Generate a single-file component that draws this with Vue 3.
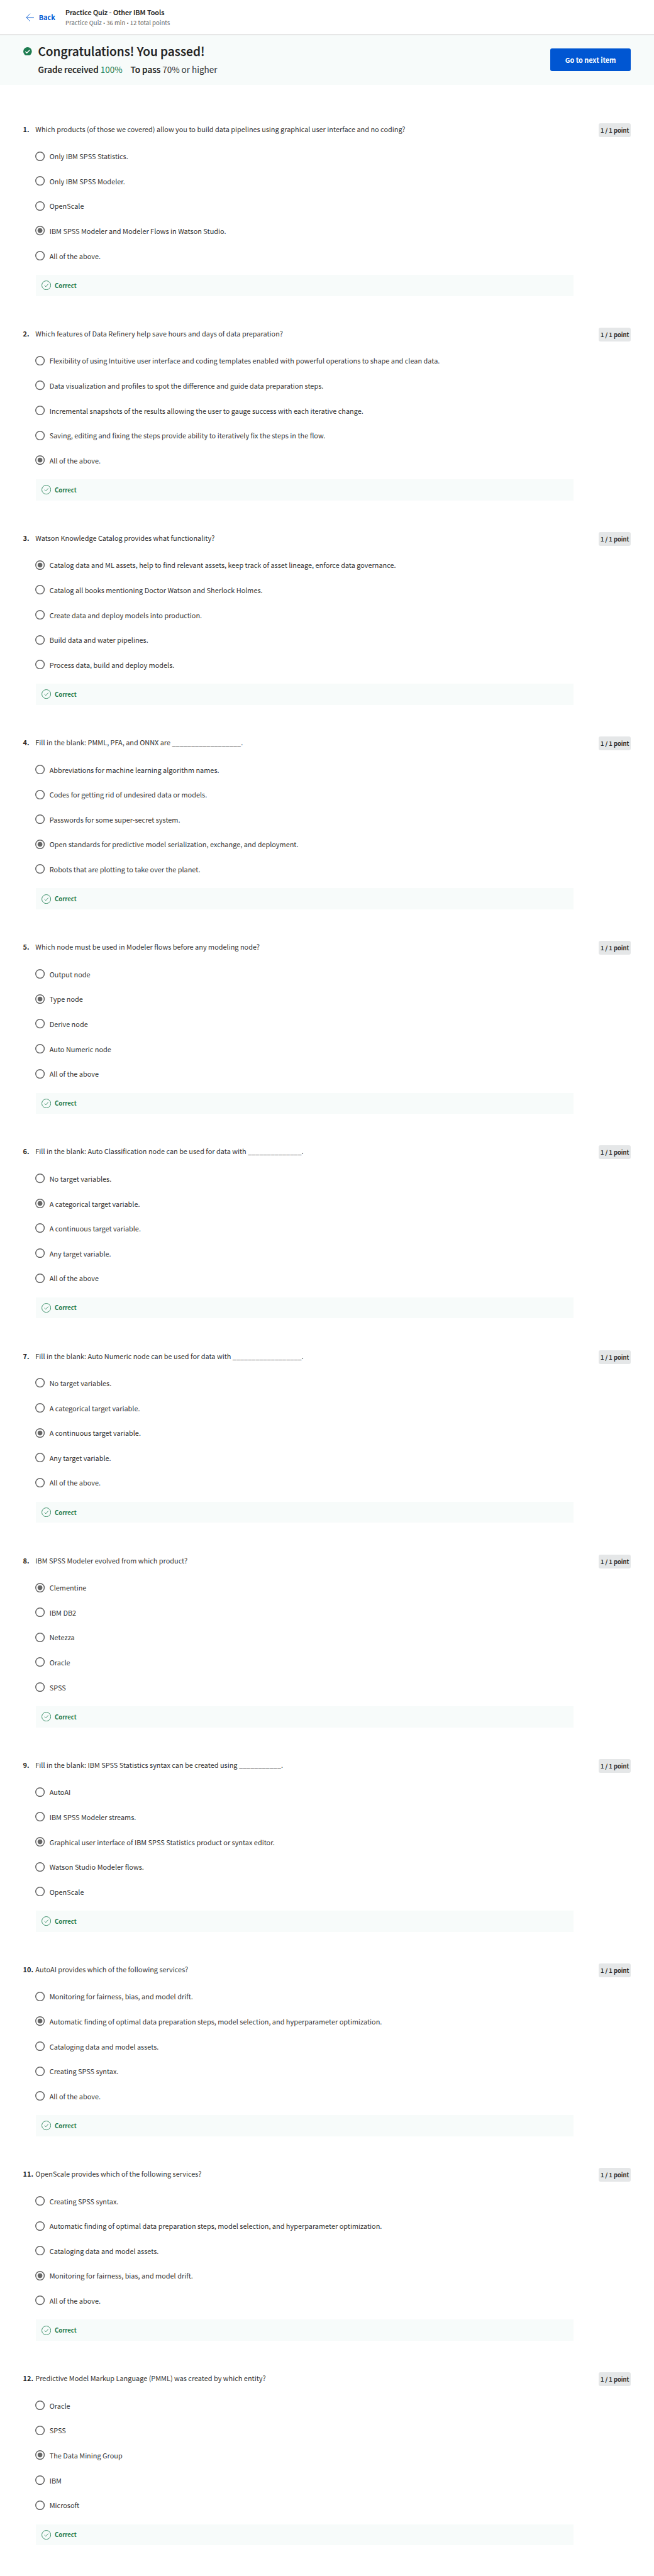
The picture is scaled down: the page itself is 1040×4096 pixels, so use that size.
<script setup>
const questions = [
  { text: 'Which products (of those we covered) allow you to build data pipelines using graphical user interface and no coding?', picked: 3,
    options: ['Only IBM SPSS Statistics.', 'Only IBM SPSS Modeler.', 'OpenScale', 'IBM SPSS Modeler and Modeler Flows in Watson Studio.', 'All of the above.'] },
  { text: 'Which features of Data Refinery help save hours and days of data preparation?', picked: 4,
    options: ['Flexibility of using Intuitive user interface and coding templates enabled with powerful operations to shape and clean data.', 'Data visualization and profiles to spot the difference and guide data preparation steps.', 'Incremental snapshots of the results allowing the user to gauge success with each iterative change.', 'Saving, editing and fixing the steps provide ability to iteratively fix the steps in the flow.', 'All of the above.'] },
  { text: 'Watson Knowledge Catalog provides what functionality?', picked: 0,
    options: ['Catalog data and ML assets, help to find relevant assets, keep track of asset lineage, enforce data governance.', 'Catalog all books mentioning Doctor Watson and Sherlock Holmes.', 'Create data and deploy models into production.', 'Build data and water pipelines.', 'Process data, build and deploy models.'] },
  { text: 'Fill in the blank: PMML, PFA, and ONNX are __________________.', picked: 3,
    options: ['Abbreviations for machine learning algorithm names.', 'Codes for getting rid of undesired data or models.', 'Passwords for some super-secret system.', 'Open standards for predictive model serialization, exchange, and deployment.', 'Robots that are plotting to take over the planet.'] },
  { text: 'Which node must be used in Modeler flows before any modeling node?', picked: 1,
    options: ['Output node', 'Type node', 'Derive node', 'Auto Numeric node', 'All of the above'] },
  { text: 'Fill in the blank: Auto Classification node can be used for data with ______________.', picked: 1,
    options: ['No target variables.', 'A categorical target variable.', 'A continuous target variable.', 'Any target variable.', 'All of the above'] },
  { text: 'Fill in the blank: Auto Numeric node can be used for data with __________________.', picked: 2,
    options: ['No target variables.', 'A categorical target variable.', 'A continuous target variable.', 'Any target variable.', 'All of the above.'] },
  { text: 'IBM SPSS Modeler evolved from which product?', picked: 0,
    options: ['Clementine', 'IBM DB2', 'Netezza', 'Oracle', 'SPSS'] },
  { text: 'Fill in the blank: IBM SPSS Statistics syntax can be created using ___________.', picked: 2,
    options: ['AutoAI', 'IBM SPSS Modeler streams.', 'Graphical user interface of IBM SPSS Statistics product or syntax editor.', 'Watson Studio Modeler flows.', 'OpenScale'] },
  { text: 'AutoAI provides which of the following services?', picked: 1,
    options: ['Monitoring for fairness, bias, and model drift.', 'Automatic finding of optimal data preparation steps, model selection, and hyperparameter optimization.', 'Cataloging data and model assets.', 'Creating SPSS syntax.', 'All of the above.'] },
  { text: 'OpenScale provides which of the following services?', picked: 3,
    options: ['Creating SPSS syntax.', 'Automatic finding of optimal data preparation steps, model selection, and hyperparameter optimization.', 'Cataloging data and model assets.', 'Monitoring for fairness, bias, and model drift.', 'All of the above.'] },
  { text: 'Predictive Model Markup Language (PMML) was created by which entity?', picked: 2,
    options: ['Oracle', 'SPSS', 'The Data Mining Group', 'IBM', 'Microsoft'] },
]
</script>

<template>
  <div class="page">
    <header class="topbar">
      <a class="back">
        <svg class="arrow" viewBox="0 0 18 18" fill="none" stroke="currentColor" stroke-width="1.1">
          <path d="M17 9H1.2M9 1L1.2 9L9 17" />
        </svg>
        <span>Back</span>
      </a>
      <div class="titles">
        <div class="title">Practice Quiz - Other IBM Tools</div>
        <div class="subtitle">Practice Quiz <i>•</i> 36 min <i>•</i> 12 total points</div>
      </div>
    </header>

    <section class="summary">
      <svg class="passed" viewBox="0 0 18 18">
        <circle cx="9" cy="9" r="9" fill="#1d7c50" />
        <path d="M4.3 9.3L7.4 12.2L13.6 5.8" fill="none" stroke="#fff" stroke-width="1.9" />
      </svg>
      <div class="result">
        <h1>Congratulations! You passed!</h1>
        <p class="grades">
          <span><b>Grade received</b> <em>100%</em></span>
          <span><b>To pass</b> 70% or higher</span>
        </p>
      </div>
      <button class="next">Go to next item</button>
    </section>

    <main class="quiz">
      <section v-for="(q, i) in questions" :key="i" class="question">
        <div class="head">
          <span class="num">{{ i + 1 }}.</span>
          <span class="prompt">{{ q.text }}</span>
          <span class="points">1 / 1 point</span>
        </div>
        <div class="options">
          <label v-for="(o, j) in q.options" :key="j" class="option">
            <svg class="radio" viewBox="0 0 20 20">
              <circle cx="10" cy="10" r="9" fill="#fff" stroke="#666" stroke-width="2" />
              <circle v-if="j === q.picked" cx="10" cy="10" r="5" fill="#666" />
            </svg>
            <span>{{ o }}</span>
          </label>
        </div>
        <div class="feedback">
          <svg class="check" viewBox="0 0 20 20" fill="none" stroke="currentColor" stroke-width="1.1">
            <circle cx="10" cy="10" r="9.3" />
            <path d="M6.2 10.2L9 12.9L14.1 7.3" />
          </svg>
          <span>Correct</span>
        </div>
      </section>
    </main>
  </div>
</template>

<style>
body {
  margin: 0;
  background: #fff;
}
</style>

<style scoped>
.page {
  --u: 0.76148px;
  box-sizing: border-box;
  width: 1040px;
  height: 4096px;
  overflow: hidden;
  background: #fff;
  color: #1f1f1f;
  font-family: "Noto Sans CJK SC", "Noto Sans", sans-serif;
  font-size: calc(14.33 * var(--u));
  white-space: nowrap;
}
.topbar {
  box-sizing: border-box;
  display: flex;
  height: calc(73 * var(--u));
  padding-left: calc(54 * var(--u));
  border-bottom: 1px solid #bbb;
}
.back {
  display: flex;
  align-items: center;
  gap: calc(9 * var(--u));
  width: calc(82.5 * var(--u));
  height: calc(72 * var(--u));
  color: #0056d2;
  font-size: calc(14.3 * var(--u));
  font-weight: 700;
}
.arrow {
  width: calc(18 * var(--u));
  height: calc(18 * var(--u));
}
.titles {
  padding-top: calc(16 * var(--u));
}
.title {
  font-size: calc(14.2 * var(--u));
  font-weight: 500;
  line-height: calc(20 * var(--u));
  -webkit-text-stroke: 0.2px currentColor;
}
.subtitle {
  margin-top: calc(3 * var(--u));
  color: #666;
  font-size: calc(12.53 * var(--u));
  line-height: calc(18 * var(--u));
}
.subtitle i {
  font-family: Roboto, sans-serif;
  font-style: normal;
}
.summary {
  box-sizing: border-box;
  display: flex;
  align-items: flex-start;
  height: calc(104 * var(--u));
  padding: 0 calc(48 * var(--u)) 0 calc(49 * var(--u));
  background: #f7fbfa;
}
.passed {
  width: calc(18 * var(--u));
  height: calc(18 * var(--u));
  margin-top: calc(25 * var(--u));
}
.result {
  flex: 1;
  padding: calc(15 * var(--u)) 0 0 calc(12.5 * var(--u));
}
h1 {
  margin: 0;
  font-size: calc(25.05 * var(--u));
  font-weight: 500;
  line-height: calc(36 * var(--u));
  -webkit-text-stroke: 0.25px currentColor;
}
.grades {
  display: flex;
  gap: calc(17 * var(--u));
  margin: calc(8 * var(--u)) 0 0;
  color: #333;
  font-size: calc(17.75 * var(--u));
  line-height: calc(28 * var(--u));
}
.grades b {
  color: #1f1f1f;
  font-weight: 500;
  -webkit-text-stroke: 0.2px currentColor;
}
.grades em {
  color: #1d7c50;
  font-style: normal;
}
.next {
  width: calc(169 * var(--u));
  height: calc(48 * var(--u));
  margin: calc(28 * var(--u)) 0 0;
  padding: 0;
  border: 0;
  border-radius: calc(4 * var(--u));
  background: #0056d2;
  color: #fff;
  font-family: inherit;
  font-size: calc(14.25 * var(--u));
  font-weight: 700;
}
.quiz {
  padding: calc(80 * var(--u)) calc(48 * var(--u)) 0;
}
.question {
  height: calc(427 * var(--u));
}
.head {
  display: flex;
  height: calc(43 * var(--u));
  line-height: calc(24 * var(--u));
}
.num {
  width: calc(26 * var(--u));
  font-weight: 700;
}
.prompt {
  flex: 1;
  color: #333;
}
.points {
  box-sizing: border-box;
  width: calc(68 * var(--u));
  height: calc(29 * var(--u));
  border-radius: calc(4 * var(--u));
  background: #e5e7e8;
  font-size: calc(12.53 * var(--u));
  font-weight: 500;
  line-height: calc(29 * var(--u));
  text-align: center;
  -webkit-text-stroke: 0.2px currentColor;
}
.options {
  padding-left: calc(26 * var(--u));
  color: #333;
}
.option {
  display: flex;
  align-items: center;
  gap: calc(9.4 * var(--u));
  height: calc(52 * var(--u));
}
.radio {
  width: calc(20 * var(--u));
  height: calc(20 * var(--u));
}
.feedback {
  display: flex;
  align-items: center;
  gap: calc(7.2 * var(--u));
  height: calc(44 * var(--u));
  margin: calc(14 * var(--u)) calc(120 * var(--u)) 0 calc(27 * var(--u));
  padding-left: calc(12 * var(--u));
  background: #f7fbfa;
  color: #1d7c50;
  font-size: calc(12.53 * var(--u));
  font-weight: 700;
}
.check {
  width: calc(20 * var(--u));
  height: calc(20 * var(--u));
}
</style>
